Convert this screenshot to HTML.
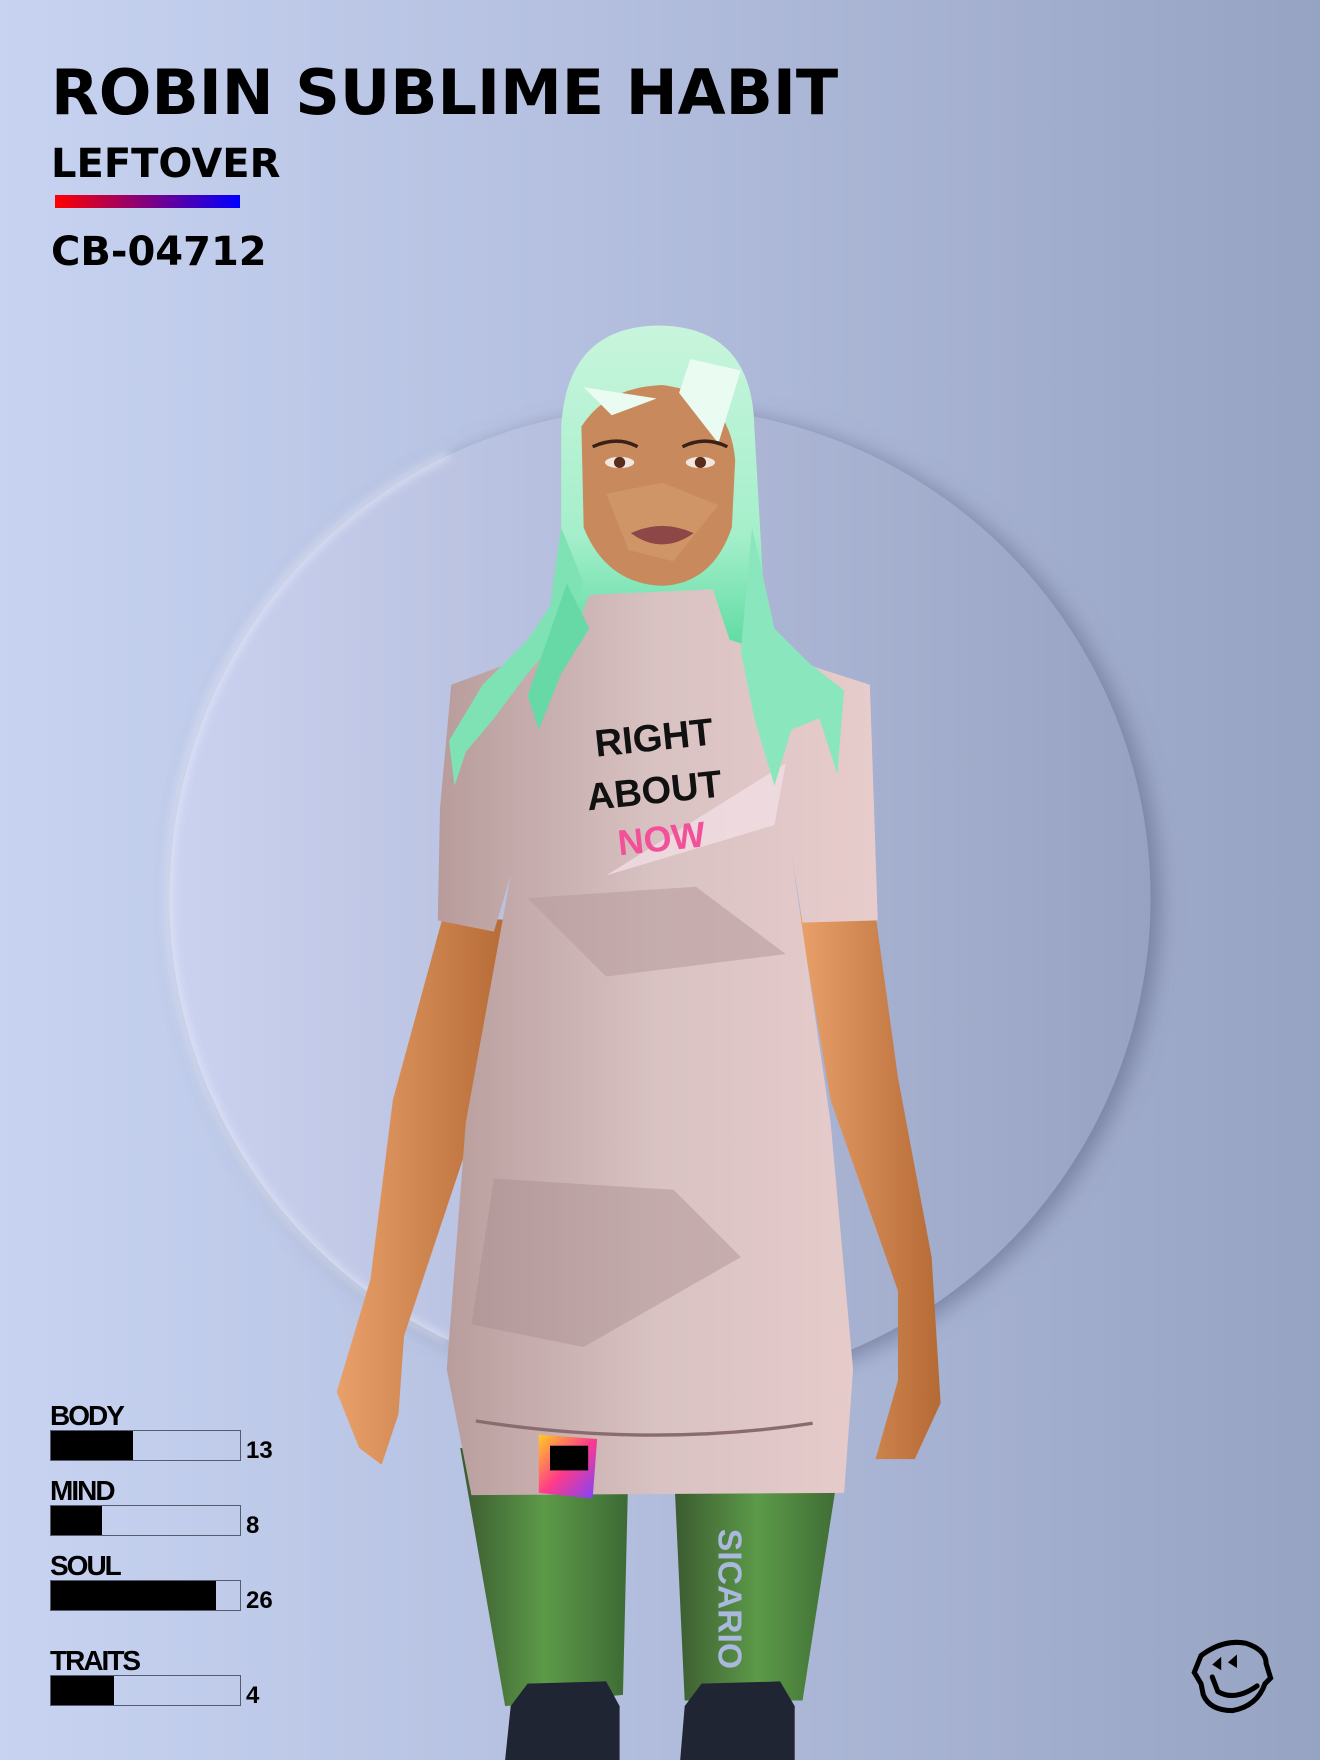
<!DOCTYPE html>
<html><head><meta charset="utf-8"><style>
html,body{margin:0;padding:0}
body{width:1320px;height:1760px;position:relative;overflow:hidden;background:linear-gradient(90deg,#c7d3f1 0%,#b4bfdf 45%,#97a3c2 100%);font-family:"DejaVu Sans",sans-serif}
.t{position:absolute;left:0;top:0;white-space:nowrap;font-weight:bold;color:#000}
.lab{position:absolute;font-family:"Liberation Sans",sans-serif;font-weight:bold;font-size:28px;letter-spacing:-2px;color:#000;line-height:1}
.bar{position:absolute;left:50px;width:189px;height:29px;border:1px solid #555c70;box-sizing:content-box}
.bar i{position:absolute;left:0;top:0;bottom:0;background:#000}
.num{position:absolute;left:246px;font-family:"Liberation Sans",sans-serif;font-weight:bold;font-size:24px;line-height:1}
</style></head><body>
<svg width="1320" height="1760" viewBox="0 0 1176 1568" style="position:absolute;left:0;top:0">
<defs>
<linearGradient id="cg" x1="0" x2="1"><stop offset="0" stop-color="#cbd2f0"/><stop offset="1" stop-color="#97a2c2"/></linearGradient>
<filter id="sh" x="-20%" y="-20%" width="140%" height="140%"><feDropShadow dx="8" dy="4" stdDeviation="10" flood-color="#5c6585" flood-opacity="0.6"/></filter>
<filter id="bl"><feGaussianBlur stdDeviation="4"/></filter>
<linearGradient id="hair" x1="0" y1="0" x2="0" y2="1"><stop offset="0" stop-color="#c8f5dc"/><stop offset="0.6" stop-color="#a5efcb"/><stop offset="1" stop-color="#4fd79a"/></linearGradient>
<linearGradient id="dress" x1="0" x2="1"><stop offset="0" stop-color="#b89c9c"/><stop offset="0.5" stop-color="#d9c2c2"/><stop offset="1" stop-color="#e8cccc"/></linearGradient>
<linearGradient id="skin" x1="0" x2="1"><stop offset="0" stop-color="#e9a06a"/><stop offset="1" stop-color="#b56a35"/></linearGradient>
<linearGradient id="leg" x1="0" x2="1"><stop offset="0" stop-color="#3b5a30"/><stop offset="0.5" stop-color="#5c9a48"/><stop offset="1" stop-color="#3d6a34"/></linearGradient>
<linearGradient id="tag" x1="0" y1="0" x2="1" y2="1"><stop offset="0" stop-color="#ffcc22"/><stop offset="0.5" stop-color="#ff3a8a"/><stop offset="1" stop-color="#7a44ff"/></linearGradient>
</defs>
<circle cx="588" cy="800" r="437" fill="url(#cg)" filter="url(#sh)"/>
<path d="M400 1195 A437 437 0 0 1 400 405" fill="none" stroke="#f2f4fd" stroke-width="5" opacity="0.7" filter="url(#bl)"/>
<!-- legs -->
<path d="M410 1290 L560 1300 L555 1510 L450 1520 Z" fill="url(#leg)"/>
<path d="M600 1300 L750 1290 L715 1515 L610 1515 Z" fill="url(#leg)"/>
<text x="640" y="1362" transform="rotate(90 640 1362)" font-family="Liberation Sans" font-weight="bold" font-size="30" fill="#a9b8dc">SICARIO</text>
<path d="M455 1520 L470 1500 L540 1498 L552 1520 L552 1568 L450 1568 Z" fill="#1f2533"/>
<path d="M610 1520 L625 1500 L695 1498 L708 1520 L708 1568 L606 1568 Z" fill="#1f2533"/>
<!-- arms -->
<path d="M395 815 L455 820 L440 950 L360 1190 L355 1260 L340 1305 L320 1290 L300 1240 L330 1140 L350 980 Z" fill="url(#skin)"/>
<path d="M712 815 L780 815 L800 960 L830 1120 L838 1250 L815 1300 L780 1300 L800 1230 L800 1150 L740 980 Z" fill="url(#skin)"/>
<!-- back hair -->
<path d="M585 290 Q670 290 672 380 L680 520 L690 590 L640 600 L530 600 L490 590 L500 470 L500 380 Q505 292 585 290 Z" fill="url(#hair)"/>
<!-- dress -->
<path d="M525 530 L635 525 L650 570 L775 610 L782 820 L715 822 L705 760 L740 1000 L760 1220 L752 1330 L420 1332 L398 1220 L415 1000 L455 780 L440 830 L390 820 L392 720 L402 610 L510 570 Z" fill="url(#dress)"/>
<path d="M470 800 L620 790 L700 850 L540 870 Z" fill="#b79d9f" opacity="0.6"/>
<path d="M440 1050 L600 1060 L660 1120 L520 1200 L420 1180 Z" fill="#a88e90" opacity="0.45"/>
<path d="M540 780 L700 680 L690 735 Z" fill="#f0dde3" opacity="0.8"/>
<path d="M424 1266 Q580 1290 724 1268" stroke="#8a6c6e" stroke-width="3" fill="none"/>
<path d="M480 1278 L532 1282 L528 1335 L480 1330 Z" fill="url(#tag)"/>
<rect x="490" y="1288" width="34" height="22" fill="#000"/>
<text x="530" y="668" font-family="Liberation Sans" font-weight="900" font-size="34" fill="#111" transform="rotate(-6 590 660)">RIGHT</text>
<text x="522" y="715" font-family="Liberation Sans" font-weight="900" font-size="34" fill="#111" transform="rotate(-6 590 700)">ABOUT</text>
<text x="550" y="758" font-family="Liberation Sans" font-weight="900" font-size="32" fill="#f2519a" transform="rotate(-6 590 745)">NOW</text>
<!-- front hair strands -->
<path d="M500 470 L520 520 L505 560 L470 600 L440 640 L415 670 L405 700 L400 660 L430 610 L470 570 L490 540 Z" fill="#7fe2b4"/>
<path d="M505 520 L525 560 L500 600 L480 650 L470 620 Z" fill="#66d9a6"/>
<path d="M670 470 L690 560 L720 590 L752 615 L746 690 L730 640 L705 650 L690 700 L672 640 L660 580 Z" fill="#8ae7bd"/>
<!-- face -->
<path d="M518 380 Q540 345 590 343 Q650 350 655 410 L652 470 Q635 520 590 522 Q540 520 520 470 Z" fill="#c88a5c"/>
<path d="M540 440 L590 430 L640 450 L600 500 L560 490 Z" fill="#d39a6c" opacity="0.7"/>
<path d="M520 345 L585 355 L545 370 Z M615 320 L660 330 L640 395 L605 350 Z" fill="#eafbf1"/>
<path d="M528 398 Q550 388 568 398 M608 398 Q628 388 648 398" stroke="#3a2018" stroke-width="3" fill="none"/>
<ellipse cx="552" cy="412" rx="13" ry="5" fill="#f2e6e0"/><circle cx="552" cy="412" r="5" fill="#5a2c1c"/>
<ellipse cx="624" cy="412" rx="13" ry="5" fill="#f2e6e0"/><circle cx="624" cy="412" r="5" fill="#5a2c1c"/>
<path d="M562 475 Q590 462 618 475 Q590 495 562 475 Z" fill="#8e4747"/>
<!-- logo -->
<g fill="none" stroke="#000" stroke-width="4.5" stroke-linecap="round">
<path d="M1070 1475 Q1090 1460 1110 1464 Q1128 1470 1128 1482 L1132 1495 L1127 1500 Q1120 1520 1098 1524 Q1078 1524 1072 1510 L1070 1500 L1064 1490 Z"/>
<path d="M1080 1494 L1085 1507 Q1100 1516 1120 1502"/>
</g>
<path d="M1080 1483 l8 -7 l0 12 z M1094 1481 l8 -7 l0 12 z" fill="#000"/>
</svg>
<div class="t" style="left:51px;top:56px;font-size:62px">ROBIN SUBLIME HABIT</div>
<div class="t" style="left:51px;top:141px;font-size:40px">LEFTOVER</div>
<div style="position:absolute;left:55px;top:195px;width:185px;height:13px;background:linear-gradient(90deg,#f00,#00f)"></div>
<div class="t" style="left:51px;top:229px;font-size:40px">CB-04712</div>

<div class="lab" style="left:50px;top:1402px">BODY</div>
<div class="bar" style="top:1430px"><i style="width:82px"></i></div><div class="num" style="top:1439px">13</div>
<div class="lab" style="left:50px;top:1477px">MIND</div>
<div class="bar" style="top:1505px"><i style="width:51px"></i></div><div class="num" style="top:1514px">8</div>
<div class="lab" style="left:50px;top:1552px">SOUL</div>
<div class="bar" style="top:1580px"><i style="width:165px"></i></div><div class="num" style="top:1589px">26</div>
<div class="lab" style="left:50px;top:1647px">TRAITS</div>
<div class="bar" style="top:1675px"><i style="width:63px"></i></div><div class="num" style="top:1684px">4</div>
</body></html>
